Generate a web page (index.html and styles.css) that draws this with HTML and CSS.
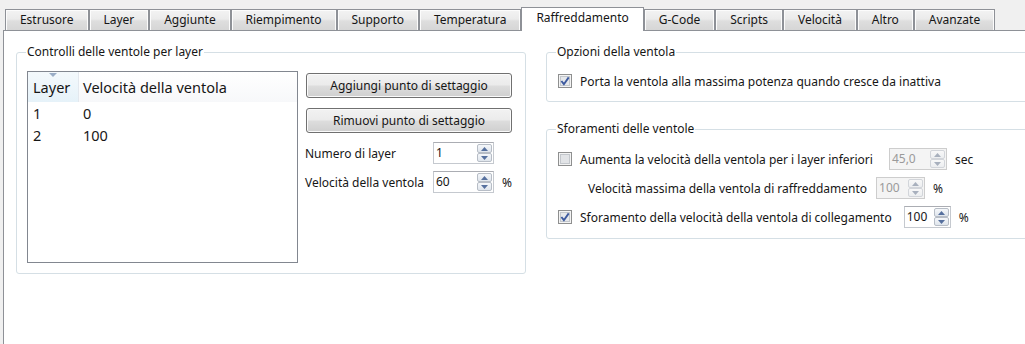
FILE: index.html
```html
<!DOCTYPE html>
<html lang="it">
<head>
<meta charset="utf-8">
<title>Raffreddamento</title>
<link rel="stylesheet" href="styles.css">
</head>
<body>
<div class="window">
  <div class="tabbar">
    <div class="tab">Estrusore</div>
    <div class="tab">Layer</div>
    <div class="tab">Aggiunte</div>
    <div class="tab">Riempimento</div>
    <div class="tab">Supporto</div>
    <div class="tab">Temperatura</div>
    <div class="tab active">Raffreddamento</div>
    <div class="tab">G-Code</div>
    <div class="tab">Scripts</div>
    <div class="tab">Velocità</div>
    <div class="tab">Altro</div>
    <div class="tab">Avanzate</div>
  </div>
  <div class="pane">
    <fieldset class="group group-layers">
      <legend>Controlli delle ventole per layer</legend>
      <div class="layers-body">
        <div class="table">
          <div class="thead">
            <div class="th th-layer"><span class="sort-arrow"></span>Layer</div>
            <div class="th th-speed">Velocità della ventola</div>
          </div>
          <div class="tr"><div class="td td-layer">1</div><div class="td">0</div></div>
          <div class="tr"><div class="td td-layer">2</div><div class="td">100</div></div>
        </div>
        <div class="controls">
          <button class="btn btn-first">Aggiungi punto di settaggio</button>
          <button class="btn btn-second">Rimuovi punto di settaggio</button>
          <div class="form-grid">
            <span class="lbl">Numero di layer</span>
            <div class="spin spin-61"><span class="spin-val">1</span><span class="spin-btns"><span class="sb"><svg width="7" height="4" viewBox="0 0 7 4"><path d="M0 4 L3.5 0 L7 4 Z" fill="#56709e"/></svg></span><span class="sb"><svg width="7" height="4" viewBox="0 0 7 4"><path d="M0 0 L3.5 4 L7 0 Z" fill="#56709e"/></svg></span></span></div>
            <span class="unit"></span>
            <span class="lbl">Velocità della ventola</span>
            <div class="spin spin-61"><span class="spin-val">60</span><span class="spin-btns"><span class="sb"><svg width="7" height="4" viewBox="0 0 7 4"><path d="M0 4 L3.5 0 L7 4 Z" fill="#56709e"/></svg></span><span class="sb"><svg width="7" height="4" viewBox="0 0 7 4"><path d="M0 0 L3.5 4 L7 0 Z" fill="#56709e"/></svg></span></span></div>
            <span class="unit">%</span>
          </div>
        </div>
      </div>
    </fieldset>
    <div class="right-col">
      <fieldset class="group group-options">
        <legend>Opzioni della ventola</legend>
        <div class="row">
          <svg class="cb" width="14" height="14" viewBox="0 0 14 14"><rect x="0.5" y="0.5" width="13" height="13" fill="#f4f4f4" stroke="#8e8f8f"/><rect x="2.5" y="2.5" width="9" height="9" fill="#e6e8eb" stroke="#c3c7cc"/><path d="M3.4 7 L5.9 10.2 L10.7 3.4" fill="none" stroke="#3d5a9f" stroke-width="1.9"/></svg>
          <span>Porta la ventola alla massima potenza quando cresce da inattiva</span>
        </div>
      </fieldset>
      <fieldset class="group group-overrides">
        <legend>Sforamenti delle ventole</legend>
        <div class="row row-low">
          <svg class="cb" width="14" height="14" viewBox="0 0 14 14"><rect x="0.5" y="0.5" width="13" height="13" fill="#f4f4f4" stroke="#8e8f8f"/><rect x="2.5" y="2.5" width="9" height="9" fill="#e2e4e7" stroke="#c3c7cc"/></svg>
          <span class="row-text">Aumenta la velocità della ventola per i layer inferiori</span>
          <div class="spin spin-58 disabled"><span class="spin-val">45,0</span><span class="spin-btns"><span class="sb"><svg width="7" height="4" viewBox="0 0 7 4"><path d="M0 4 L3.5 0 L7 4 Z" fill="#a8b0bd"/></svg></span><span class="sb"><svg width="7" height="4" viewBox="0 0 7 4"><path d="M0 0 L3.5 4 L7 0 Z" fill="#a8b0bd"/></svg></span></span></div>
          <span class="unit">sec</span>
        </div>
        <div class="row row-indent">
          <span class="row-text">Velocità massima della ventola di raffreddamento</span>
          <div class="spin spin-49 disabled"><span class="spin-val">100</span><span class="spin-btns"><span class="sb"><svg width="7" height="4" viewBox="0 0 7 4"><path d="M0 4 L3.5 0 L7 4 Z" fill="#a8b0bd"/></svg></span><span class="sb"><svg width="7" height="4" viewBox="0 0 7 4"><path d="M0 0 L3.5 4 L7 0 Z" fill="#a8b0bd"/></svg></span></span></div>
          <span class="unit">%</span>
        </div>
        <div class="row row-bridge">
          <svg class="cb" width="14" height="14" viewBox="0 0 14 14"><rect x="0.5" y="0.5" width="13" height="13" fill="#f4f4f4" stroke="#8e8f8f"/><rect x="2.5" y="2.5" width="9" height="9" fill="#e6e8eb" stroke="#c3c7cc"/><path d="M3.4 7 L5.9 10.2 L10.7 3.4" fill="none" stroke="#3d5a9f" stroke-width="1.9"/></svg>
          <span class="row-text">Sforamento della velocità della ventola di collegamento</span>
          <div class="spin spin-47"><span class="spin-val">100</span><span class="spin-btns"><span class="sb"><svg width="7" height="4" viewBox="0 0 7 4"><path d="M0 4 L3.5 0 L7 4 Z" fill="#56709e"/></svg></span><span class="sb"><svg width="7" height="4" viewBox="0 0 7 4"><path d="M0 0 L3.5 4 L7 0 Z" fill="#56709e"/></svg></span></span></div>
          <span class="unit">%</span>
        </div>
      </fieldset>
    </div>
  </div>
</div>
</body>
</html>
```

FILE: styles.css
```css
* { box-sizing: border-box; }
html, body { margin: 0; padding: 0; }
body {
  width: 1025px;
  height: 344px;
  overflow: hidden;
  background: #f0f0f0;
  font-family: "Noto Sans", "Open Sans", sans-serif;
  font-size: 12px;
  color: #161616;
}
.window { width: 1060px; }

/* Tabs */
.tabbar {
  display: flex;
  align-items: flex-end;
  height: 30px;
  padding-left: 5px;
}
.tab {
  height: 21px;
  line-height: 20px;
  padding: 0 13.95px;
  border: 1px solid #8e9197;
  border-bottom: none;
  background: linear-gradient(#f3f3f3 0%, #ebebeb 45%, #dedede 55%, #d6d6d6 100%);
  box-shadow: inset 1px 1px 0 #fcfcfc, inset -1px 0 0 #fcfcfc;
  white-space: nowrap;
}
.tab.active {
  height: 24px;
  margin-bottom: -1px;
  background: #ffffff;
  box-shadow: none;
  position: relative;
  z-index: 1;
}

/* Pane */
.pane {
  margin-left: 3px;
  width: 1050px;
  height: 330px;
  background: #ffffff;
  border: 1px solid #8e9197;
  padding: 13px 0 0 12px;
  display: flex;
  gap: 20px;
  align-items: flex-start;
}

.group {
  margin: 0;
  min-width: 0;
  border: 1px solid #d5dfe5;
  border-radius: 3px;
  padding: 0 10px 10px 10px;
}
.group legend {
  padding: 0 1px;
  margin-left: -1px;
  line-height: 16px;
}

/* Left group */
.group-layers {
  width: 510px;
  height: 230px;
  padding-top: 11px;
}
.layers-body {
  display: flex;
  gap: 8px;
}
.table {
  width: 271px;
  height: 192px;
  border: 1px solid #828790;
  background: #ffffff;
  font-size: 14.5px;
}
.thead {
  display: flex;
  height: 30px;
  background: linear-gradient(#ffffff, #f7f8fa);
}
.th {
  position: relative;
  line-height: 20px;
  padding: 5px 0 0 5px;
}
.th-layer {
  width: 51px;
  padding-left: 5px;
  border-right: 1px solid #e3e8ee;
  background: linear-gradient(#f4f9fc, #e6f2f9);
}
.sort-arrow {
  position: absolute;
  top: 1px;
  left: 21px;
  width: 0;
  height: 0;
  border-left: 4px solid transparent;
  border-right: 4px solid transparent;
  border-top: 4px solid #9aadc6;
}
.th-speed { flex: 1; padding-left: 4px; }
.tr {
  display: flex;
  height: 22px;
  line-height: 22px;
}
.td { padding-left: 4px; }
.td-layer { width: 51px; padding-left: 5px; }

/* Buttons & spinners */
.controls {
  width: 206px;
  display: flex;
  flex-direction: column;
}
.btn {
  height: 25px;
  border: 1px solid #707070;
  border-radius: 3px;
  background: linear-gradient(#f2f2f2 0%, #ebebeb 48%, #dddddd 52%, #cfcfcf 100%);
  box-shadow: inset 0 0 0 1px #fafafa;
  font: inherit;
  color: #161616;
  padding: 0;
}
.btn-first { margin-top: 2px; }
.btn-second { margin-top: 10px; }
.form-grid {
  margin-top: 9px;
  margin-left: -1px;
  display: grid;
  grid-template-columns: 120px 61px auto;
  column-gap: 8px;
  row-gap: 7px;
  align-items: center;
}
.form-grid .lbl { white-space: nowrap; }

.spin {
  height: 22px;
  display: flex;
  align-items: stretch;
  border: 1px solid #c5c9cf;
  border-top-color: #abadb3;
  background: #ffffff;
  padding: 1px 1px 1px 0;
}
.spin-61 { width: 61px; }
.spin-58 { width: 58px; }
.spin-49 { width: 49px; }
.spin-47 { width: 47px; }
.spin-val {
  flex: 1;
  padding-left: 2px;
  line-height: 18px;
}
.spin-btns {
  width: 15px;
  display: flex;
  flex-direction: column;
}
.sb {
  flex: 1;
  display: flex;
  align-items: center;
  justify-content: center;
  border: 1px solid #b7bdc6;
  border-radius: 2px;
  background: linear-gradient(#f5f7fa, #dfe5ec);
}
.spin.disabled {
  background: #f4f4f4;
  border-color: #cdcdcd;
  color: #9a9a9a;
}
.spin.disabled .sb {
  border-color: #d2d5da;
  background: linear-gradient(#f8f8f8, #eceef0);
}

/* Right column */
.right-col {
  width: 490px;
  display: flex;
  flex-direction: column;
}
.group-options {
  height: 58px;
  padding-top: 10px;
}
.group-overrides {
  margin-top: 19px;
  padding-top: 11px;
  display: flex;
  flex-direction: column;
  gap: 7px;
}
.row {
  display: flex;
  align-items: center;
  height: 22px;
  padding-left: 1px;
}
.cb { flex: none; margin-right: 8px; }
.row-indent { padding-left: 31px; }
.row .spin { margin-left: 9px; }
.row-low .spin { margin-left: 16px; }
.row-bridge .spin { margin-left: 12px; }
.row .unit { margin-left: 8px; }
```
